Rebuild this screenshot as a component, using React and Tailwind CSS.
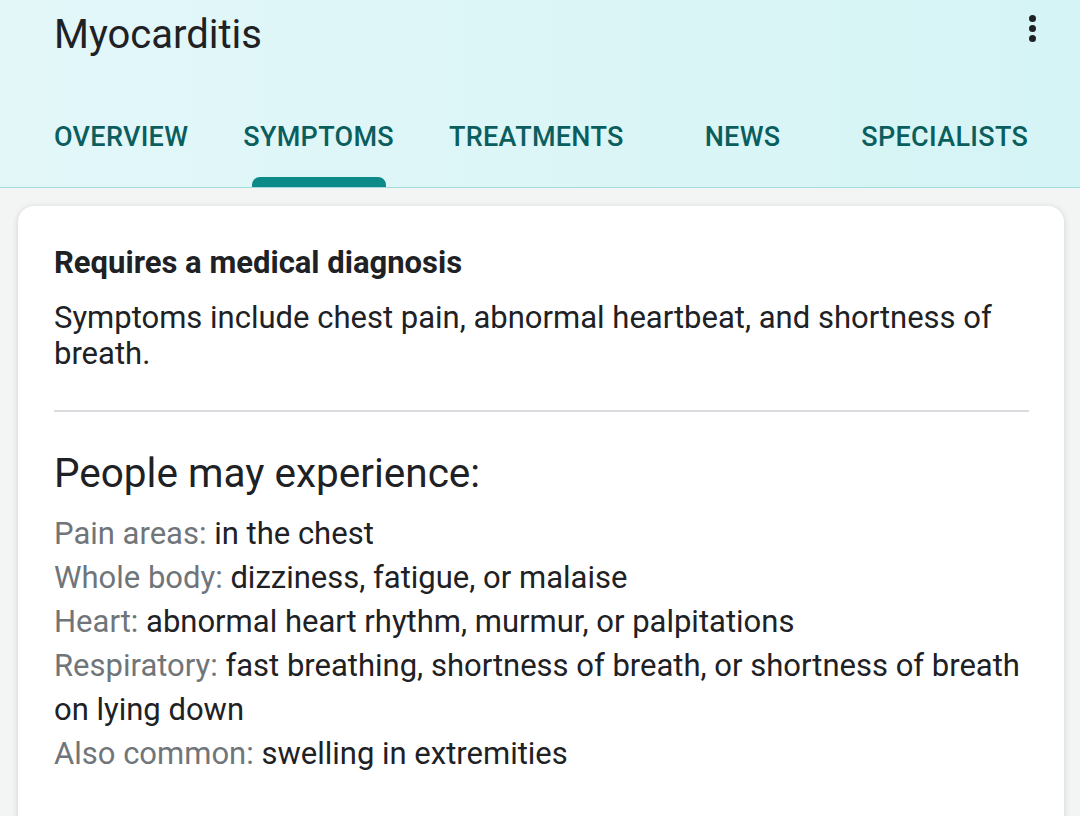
const tabs = [
  { label: "OVERVIEW", ml: "ml-[54px]" },
  { label: "SYMPTOMS", ml: "ml-[55px]", active: true },
  { label: "TREATMENTS", ml: "ml-[55px]" },
  { label: "NEWS", ml: "ml-[81px]" },
  { label: "SPECIALISTS", ml: "ml-[81px]" },
];

const rows = [
  { label: "Pain areas:", value: "in the chest" },
  { label: "Whole body:", value: "dizziness, fatigue, or malaise" },
  { label: "Heart:", value: "abnormal heart rhythm, murmur, or palpitations" },
  {
    label: "Respiratory:",
    value: "fast breathing, shortness of breath, or shortness of breath on lying down",
  },
  { label: "Also common:", value: "swelling in extremities" },
];

export default function App() {
  return (
    <div className="w-[1080px] h-[816px] overflow-hidden bg-[#f3f4f4] font-['Roboto',sans-serif] text-[#202124]">
      {/* HEADER */}
      <div className="h-[188px] bg-gradient-to-r from-[#e3f7f9] to-[#d5f4f5] border-b border-[#a3dcdc] flex flex-col">
        <div className="flex items-start justify-between h-[100px]">
          <h1 className="ml-[54px] mt-[11px] text-[40px] leading-[48px] text-[#202124]">
            Myocarditis
          </h1>
          <div className="mr-[44px] mt-[15px] flex flex-col gap-[3px]">
            <span className="w-[7px] h-[7px] rounded-full bg-[#202124]" />
            <span className="w-[7px] h-[7px] rounded-full bg-[#202124]" />
            <span className="w-[7px] h-[7px] rounded-full bg-[#202124]" />
          </div>
        </div>
        <div className="flex flex-1 items-stretch">
          {tabs.map((t) => (
            <div key={t.label} className={`${t.ml} flex flex-col items-center`}>
              <div className="h-[77px] flex items-center pb-[3px] text-[27px] font-medium tracking-[0.3px] text-[#0b5e5e] whitespace-nowrap">
                {t.label}
              </div>
              {t.active ? (
                <div className="w-[134px] h-[10px] rounded-t-[8px] bg-[#0b8a87]" />
              ) : (
                <div className="h-[10px]" />
              )}
            </div>
          ))}
        </div>
      </div>

      {/* CARD */}
      <div className="mt-[18px] ml-[18px] w-[1046px] h-[700px] bg-white rounded-[16px] shadow-[0_1px_6px_rgba(0,0,0,0.15)] px-[36px] pt-[39px]">
        <h2 className="text-[31px] leading-[36px] font-bold text-[#202124]">
          Requires a medical diagnosis
        </h2>
        <p className="mt-[19px] text-[31px] leading-[36px] text-[#202124] w-[975px]">
          Symptoms include chest pain, abnormal heartbeat, and shortness of breath.
        </p>
        <div className="mt-[38px] h-[1.5px] bg-[#dadce0] w-[975px]" />
        <h3 className="mt-[37px] text-[40.5px] leading-[48px] text-[#202124]">
          People may experience:
        </h3>
        <div className="mt-[15px] text-[31px] leading-[44px] w-[975px]">
          {rows.map((r) => (
            <div key={r.label}>
              <span className="text-[#70757a]">{r.label}</span>{" "}
              <span className="text-[#202124]">{r.value}</span>
            </div>
          ))}
        </div>
      </div>
    </div>
  );
}
